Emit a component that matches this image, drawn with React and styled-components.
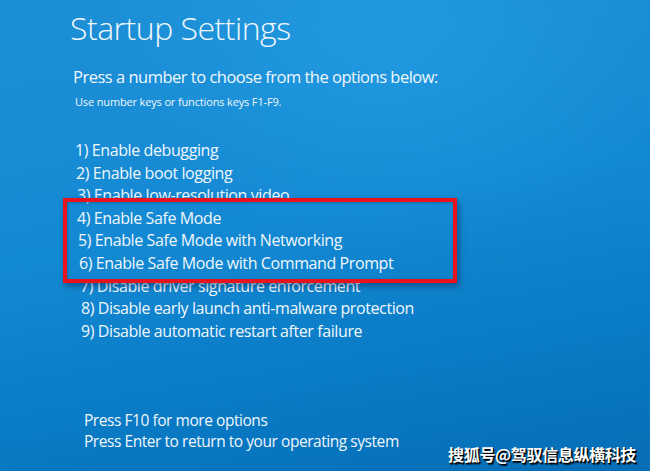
import React from "react";
import styled, { createGlobalStyle } from "styled-components";

const Global = createGlobalStyle`
  html, body { margin: 0; padding: 0; }
  body { width: 650px; height: 471px; overflow: hidden; }
`;

const Screen = styled.div`
  position: relative;
  width: 650px;
  height: 471px;
  overflow: hidden;
  box-sizing: border-box;
  padding: 8px 0 0 70px;
  display: flex;
  flex-direction: column;
  font-family: "Open Sans", "Noto Sans", sans-serif;
  color: #f0f7fc;
  background:
    radial-gradient(ellipse 420px 300px at 60% 8%, rgba(40, 165, 235, 0.5), rgba(40, 165, 235, 0) 70%),
    linear-gradient(170deg, #1d8fd6 0%, #1489d3 45%, #0878c3 80%, #066db5 100%);
`;

const Title = styled.h1`
  margin: 0;
  font-size: 32px;
  font-weight: 300;
  line-height: 40px;
  letter-spacing: -0.5px;
`;

const Lead = styled.p`
  margin: 18px 0 0 3px;
  font-size: 16.5px;
  line-height: 22px;
  letter-spacing: -0.5px;
`;

const Hint = styled.p`
  margin: 7px 0 0 5px;
  font-size: 11px;
  line-height: 14px;
  letter-spacing: -0.15px;
`;

const Options = styled.div`
  margin-top: 30px;
  display: flex;
  flex-direction: column;
`;

const Option = styled.div`
  font-size: 16px;
  line-height: 22.6px;
  letter-spacing: -0.4px;
  padding-left: ${(p) => p.$shift}px;
  white-space: nowrap;
`;

const Highlight = styled.div`
  position: relative;
  z-index: 1;
  margin: -9px 0 -8px -7px;
  width: 394px;
  box-sizing: border-box;
  border: 4px solid #e8131c;
  padding: 5px 0 4px 3px;
  box-shadow: 2px 3px 6px rgba(0, 20, 60, 0.45), inset 1px 1px 3px rgba(0, 20, 60, 0.25);
  display: flex;
  flex-direction: column;
`;

const Footer = styled.div`
  margin-top: 68px;
  display: flex;
  flex-direction: column;
`;

const FootLine = styled.div`
  font-size: 15.5px;
  line-height: 21px;
  letter-spacing: -0.45px;
  padding-left: ${(p) => p.$shift}px;
`;

const Watermark = styled.div`
  position: absolute;
  right: 14px;
  bottom: 6px;
  font-family: "Noto Sans CJK SC", sans-serif;
  font-weight: 700;
  font-size: 16px;
  line-height: 22px;
  color: #ffffff;
  text-shadow: 1px 1px 0 #000, 1.5px 1.5px 1px rgba(0, 0, 0, 0.8);
  letter-spacing: -0.35px;
`;

export default function App() {
  return (
    <Screen>
      <Global />
      <Title>Startup Settings</Title>
      <Lead>Press a number to choose from the options below:</Lead>
      <Hint>Use number keys or functions keys F1-F9.</Hint>
      <Options>
        <Option $shift={5}>1) Enable debugging</Option>
        <Option $shift={6}>2) Enable boot logging</Option>
        <Option $shift={7}>3) Enable low-resolution video</Option>
        <Highlight>
          <Option $shift={7}>4) Enable Safe Mode</Option>
          <Option $shift={8}>5) Enable Safe Mode with Networking</Option>
          <Option $shift={9}>6) Enable Safe Mode with Command Prompt</Option>
        </Highlight>
        <Option $shift={10}>7) Disable driver signature enforcement</Option>
        <Option $shift={11}>8) Disable early launch anti-malware protection</Option>
        <Option $shift={11}>9) Disable automatic restart after failure</Option>
      </Options>
      <Footer>
        <FootLine $shift={14}>Press F10 for more options</FootLine>
        <FootLine $shift={14}>Press Enter to return to your operating system</FootLine>
      </Footer>
      <Watermark>搜狐号@驾驭信息纵横科技</Watermark>
    </Screen>
  );
}
